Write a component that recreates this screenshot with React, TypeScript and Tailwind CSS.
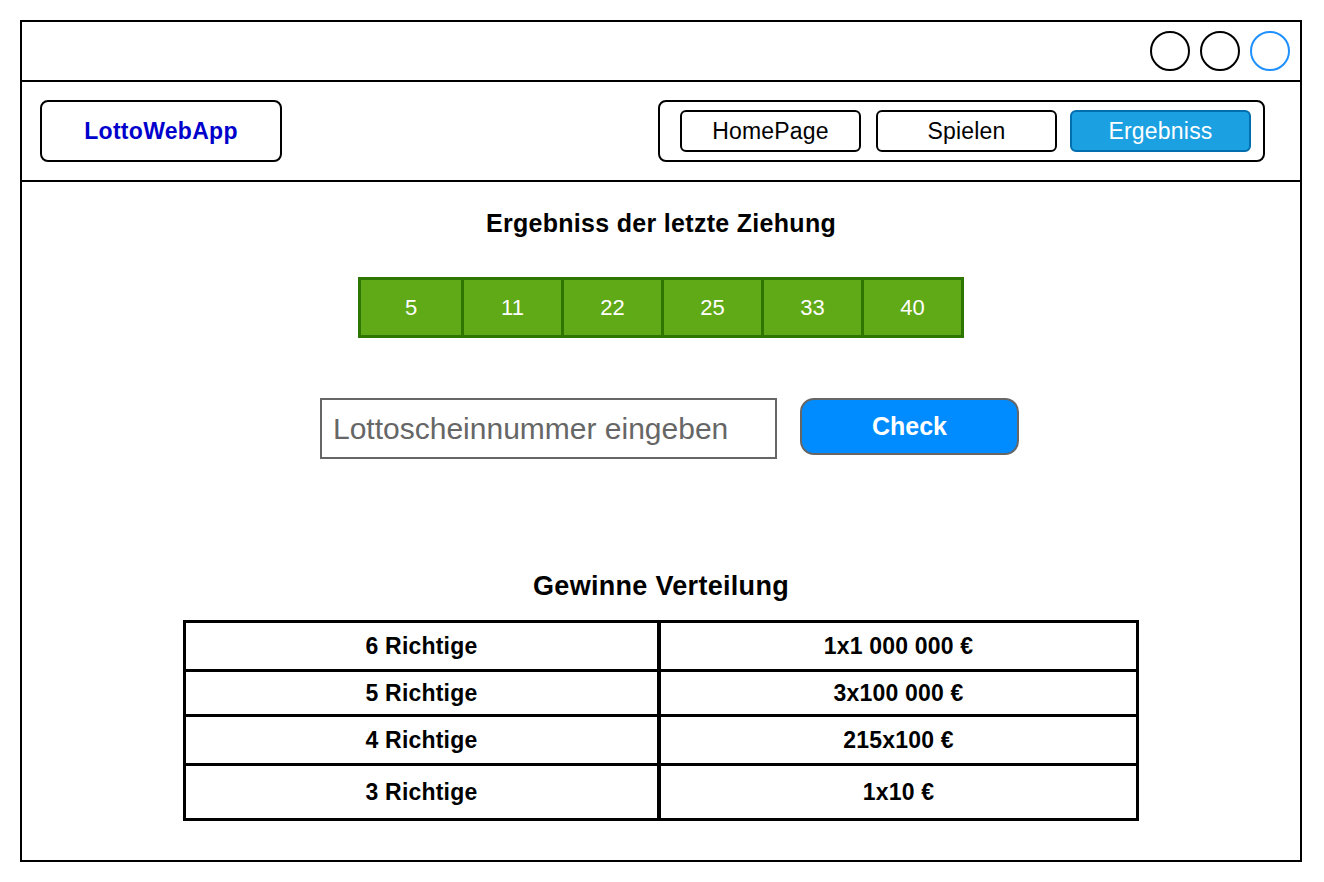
import React from "react";

const numbers = [5, 11, 22, 25, 33, 40];

const prizes = [
  { label: "6 Richtige", value: "1x1 000 000 €", h: "h-[46px]" },
  { label: "5 Richtige", value: "3x100 000 €", h: "h-[42px]" },
  { label: "4 Richtige", value: "215x100 €", h: "h-[46px]" },
  { label: "3 Richtige", value: "1x10 €", h: "h-[52px]" },
];

const App = () => {
  return (
    <div className="w-[1324px] h-[882px] bg-white p-5 font-['Liberation_Sans',Arial,sans-serif] text-black">
      <div className="w-[1282px] h-[842px] border-2 border-black flex flex-col">
        {/* window bar */}
        <div className="h-[60px] border-b-2 border-black flex items-center justify-end gap-[10px] pr-[10px]">
          <div className="w-10 h-10 rounded-full border-2 border-black" />
          <div className="w-10 h-10 rounded-full border-2 border-black" />
          <div className="w-10 h-10 rounded-full border-2 border-[#1E90FF]" />
        </div>

        {/* nav */}
        <div className="h-[100px] border-b-2 border-black flex items-center justify-between pl-[18px] pr-[35px]">
          <div className="w-[242px] h-[62px] border-2 border-black rounded-lg flex items-center justify-center">
            <span className="text-[23px] font-bold text-[#0000CC] tracking-[0.3px]">LottoWebApp</span>
          </div>
          <div className="w-[607px] h-[62px] border-2 border-black rounded-lg flex items-center pl-[20px]">
            <button className="w-[181px] h-[42px] border-2 border-black rounded-md text-[23px] tracking-[0.2px]">
              HomePage
            </button>
            <button className="ml-[15px] w-[181px] h-[42px] border-2 border-black rounded-md text-[23px] tracking-[0.2px]">
              Spielen
            </button>
            <button className="ml-[13px] w-[181px] h-[42px] border-2 border-[#006EAF] bg-[#1BA1E2] text-white rounded-md text-[23px] tracking-[0.2px]">
              Ergebniss
            </button>
          </div>
        </div>

        {/* content */}
        <div className="flex flex-col items-center pt-[26px]">
          <h1 className="text-[25px] leading-[30px] font-bold tracking-[0.3px]">Ergebniss der letzte Ziehung</h1>

          <div className="mt-[39px] flex border-[3px] border-[#2D7600]">
            {numbers.map((n, i) => (
              <div
                key={n}
                className={
                  "w-[100px] h-[55px] bg-[#60A917] text-white text-[22px] flex items-center justify-center " +
                  (i > 0 ? "border-l-[3px] border-[#2D7600]" : "")
                }
              >
                {n}
              </div>
            ))}
          </div>

          <div className="mt-[60px] flex items-start gap-[23px] pl-[17px]">
            <input
              className="w-[457px] h-[61px] border-2 border-[#666666] pl-[11px] text-[30px] placeholder:text-[#666666] outline-none"
              placeholder="Lottoscheinnummer eingeben"
            />
            <button className="w-[219px] h-[57px] rounded-[14px] border-2 border-[#666666] bg-[#008CFF] text-white text-[25px] font-bold">
              Check
            </button>
          </div>

          <h2 className="mt-[111px] text-[27px] leading-[32px] font-bold tracking-[0.3px]">Gewinne Verteilung</h2>

          <div className="mt-[18px] w-[956px] border-[3px] border-black">
            {prizes.map((p, i) => (
              <div key={p.label} className={"grid grid-cols-2 " + (i > 0 ? "border-t-[3px] border-black" : "")}>
                <div className={p.h + " border-r-[4px] border-black flex items-center justify-center text-[23px] font-bold tracking-[0.2px]"}>
                  {p.label}
                </div>
                <div className={p.h + " flex items-center justify-center text-[23px] font-bold tracking-[0.2px]"}>
                  {p.value}
                </div>
              </div>
            ))}
          </div>
        </div>
      </div>
    </div>
  );
};

export default App;
